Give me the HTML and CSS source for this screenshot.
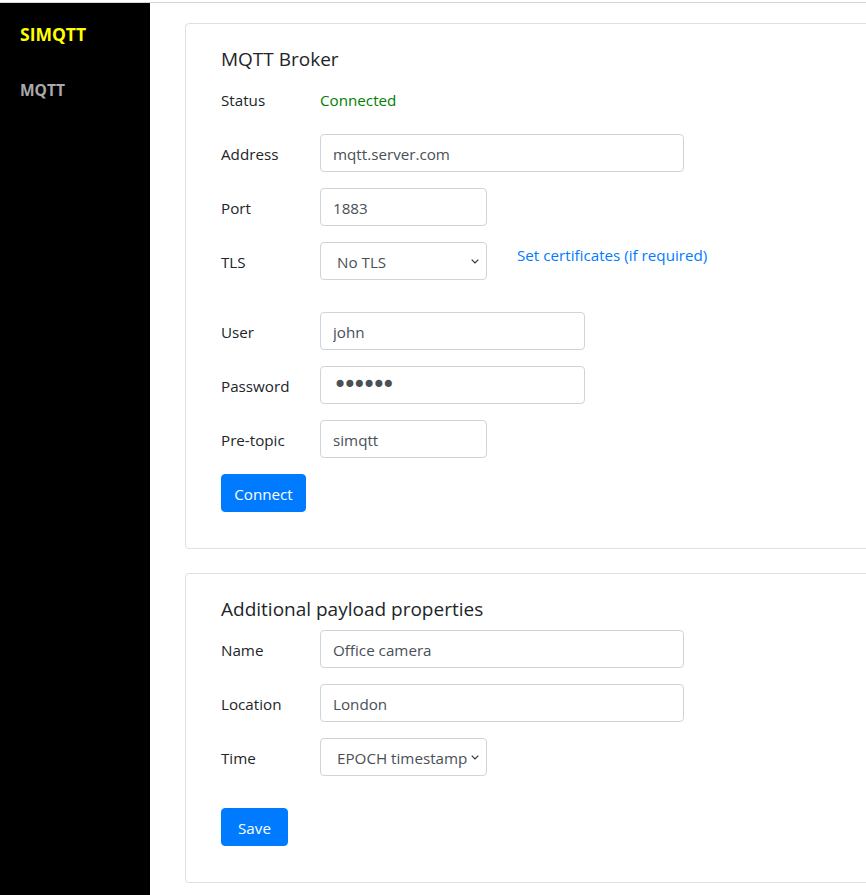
FILE: index.html
```html
<!DOCTYPE html>
<html lang="en">
<head>
<meta charset="utf-8">
<title>SIMQTT</title>
<link rel="stylesheet" href="styles.css">
</head>
<body>
<div class="page">
  <nav class="sidebar">
    <div class="brand">SIMQTT</div>
    <a class="nav-link" href="#">MQTT</a>
  </nav>
  <main class="main">
    <section class="card">
      <h5 class="card-title">MQTT Broker</h5>
      <div class="row">
        <label class="label">Status</label>
        <span class="status">Connected</span>
      </div>
      <div class="row">
        <label class="label">Address</label>
        <input class="control w-lg" type="text" value="mqtt.server.com">
      </div>
      <div class="row">
        <label class="label">Port</label>
        <input class="control w-sm" type="text" value="1883">
      </div>
      <div class="row row-tall">
        <label class="label">TLS</label>
        <select class="control select w-sm"><option>No TLS</option></select>
        <a class="link" href="#">Set certificates (if required)</a>
      </div>
      <div class="row">
        <label class="label">User</label>
        <input class="control w-md" type="text" value="john">
      </div>
      <div class="row">
        <label class="label">Password</label>
        <input class="control w-md pw" type="password" value="secret">
      </div>
      <div class="row">
        <label class="label">Pre-topic</label>
        <input class="control w-sm" type="text" value="simqtt">
      </div>
      <button class="btn btn-connect" type="button">Connect</button>
    </section>
    <section class="card">
      <h5 class="card-title">Additional payload properties</h5>
      <div class="row">
        <label class="label">Name</label>
        <input class="control w-lg" type="text" value="Office camera">
      </div>
      <div class="row">
        <label class="label">Location</label>
        <input class="control w-lg" type="text" value="London">
      </div>
      <div class="row row-tall">
        <label class="label">Time</label>
        <select class="control select w-sm"><option>EPOCH timestamp</option></select>
      </div>
      <button class="btn btn-save" type="button">Save</button>
    </section>
  </main>
</div>
</body>
</html>
```

FILE: styles.css
```css
html, body {
  margin: 0;
  padding: 0;
  background: #fff;
}
body {
  font-family: "Segoe UI", "Open Sans", "Noto Sans", sans-serif;
  font-size: 15.2px;
  line-height: 24px;
  color: #212529;
  overflow: hidden;
}
.page {
  margin-top: 2px;
  border-top: 1px solid #d4d4d4;
  display: flex;
  min-height: calc(100vh - 3px);
}
.sidebar {
  width: 150px;
  flex: 0 0 150px;
  background: #000;
  padding: 20px 0 0 20px;
  box-sizing: border-box;
  display: flex;
  flex-direction: column;
}
.brand {
  color: #ffff00;
  font-weight: 700;
  font-size: 17.5px;
  line-height: 22px;
}
.nav-link {
  margin-top: 34px;
  color: #aaaaaa;
  font-weight: 700;
  font-size: 15.5px;
  line-height: 22px;
  text-decoration: none;
}
.main {
  flex: 1;
  overflow: hidden;
  padding: 20px 0 0 35px;
}
.card {
  width: 760px;
  background: #fff;
  border: 1px solid #dfdfdf;
  border-radius: 4px;
  padding: 23px 35px 36px 35px;
  margin-bottom: 24px;
}
.card-title {
  margin: 0 0 9px 0;
  font-size: 19px;
  line-height: 24px;
  font-weight: 500;
  color: #212529;
}
.row {
  display: flex;
  align-items: center;
  height: 38px;
  margin-bottom: 16px;
}
.row-tall {
  margin-bottom: 32px;
}
.label {
  width: 99px;
  flex: 0 0 99px;
  padding-top: 2px;
}
.status {
  color: #008000;
  padding-top: 2px;
}
.control {
  box-sizing: border-box;
  height: 38px;
  border: 1px solid #ced4da;
  border-radius: 4px;
  padding: 7px 12px 5px 12px;
  font-family: inherit;
  font-size: 15.2px;
  line-height: 24px;
  color: #495057;
  background: #fff;
  margin: 0;
}
.w-lg { width: 364px; }
.w-md { width: 265px; }
.w-sm { width: 167px; }
.pw {
  font-family: "DejaVu Sans", sans-serif;
  font-size: 24px;
  letter-spacing: -4.5px;
  padding-top: 4px;
  padding-bottom: 4px;
}
.select {
  appearance: none;
  -webkit-appearance: none;
  padding: 7px 16px 5px 16px;
  background-image: url("data:image/svg+xml,%3Csvg xmlns='http://www.w3.org/2000/svg' width='8' height='5' viewBox='0 0 8 5'%3E%3Cpath d='M0.7 0.7 L4 4 L7.3 0.7' fill='none' stroke='%23333' stroke-width='1.2'/%3E%3C/svg%3E");
  background-repeat: no-repeat;
  background-position: right 7px center;
  background-size: 8px 5px;
}
.link {
  align-self: flex-start;
  margin-left: 30px;
  margin-top: 1px;
  color: #007bff;
  text-decoration: none;
}
.btn {
  display: block;
  height: 38px;
  border: 1px solid #007bff;
  border-radius: 4px;
  background: #007bff;
  color: #fff;
  font-family: inherit;
  font-size: 15.2px;
  line-height: 24px;
  padding: 2px 0 0 0;
  text-align: center;
  cursor: pointer;
}
.btn-connect { width: 85px; }
.btn-save { width: 67px; }
```
